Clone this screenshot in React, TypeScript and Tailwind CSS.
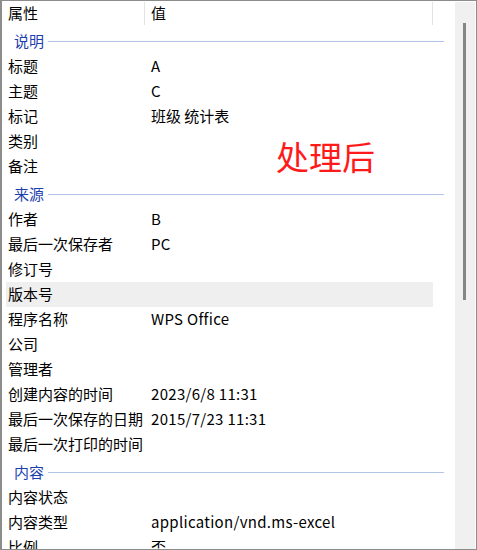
import React from "react";

type Item = { kind: "row"; label: string; value?: string; active?: boolean } | { kind: "section"; label: string };

const items: Item[] = [
  { kind: "section", label: "说明" },
  { kind: "row", label: "标题", value: "A" },
  { kind: "row", label: "主题", value: "C" },
  { kind: "row", label: "标记", value: "班级 统计表" },
  { kind: "row", label: "类别" },
  { kind: "row", label: "备注" },
  { kind: "section", label: "来源" },
  { kind: "row", label: "作者", value: "B" },
  { kind: "row", label: "最后一次保存者", value: "PC" },
  { kind: "row", label: "修订号" },
  { kind: "row", label: "版本号", active: true },
  { kind: "row", label: "程序名称", value: "WPS Office" },
  { kind: "row", label: "公司" },
  { kind: "row", label: "管理者" },
  { kind: "row", label: "创建内容的时间", value: "2023/6/8 11:31" },
  { kind: "row", label: "最后一次保存的日期", value: "2015/7/23 11:31" },
  { kind: "row", label: "最后一次打印的时间" },
  { kind: "section", label: "内容" },
  { kind: "row", label: "内容状态" },
  { kind: "row", label: "内容类型", value: "application/vnd.ms-excel" },
  { kind: "row", label: "比例", value: "否" },
];

export default function App() {
  return (
    <div
      className="relative w-[477px] h-[550px] overflow-hidden bg-white border border-[#8c8c8c] border-l-2 flex text-[15px] text-black"
      style={{ fontFamily: '"Noto Sans CJK SC", sans-serif' }}
    >
      <div className="w-[453px] flex flex-col shrink-0">
        {/* header */}
        <div className="h-[25px] flex items-stretch shrink-0">
          <div className="w-[142px] pl-[6px] leading-[24px]">属性</div>
          <div className="w-px my-[1px] bg-[#e3e3e3]" />
          <div className="w-[287px] pl-[6px] leading-[24px]">值</div>
          <div className="w-px my-[1px] bg-[#e3e3e3]" />
        </div>

        {items.map((it, i) =>
          it.kind === "section" ? (
            <div key={i} className="h-[28px] w-[442px] flex items-center pl-[12px] shrink-0">
              <span className="text-[#1d3fae] leading-none">{it.label}</span>
              <div className="flex-1 ml-[4px] mt-[2px] h-px bg-[#b3c4e6]" />
            </div>
          ) : (
            <div key={i} className="h-[25px] pl-[4px] shrink-0">
              <div className={`w-[427px] h-full flex leading-[24px] ${it.active ? "bg-[#efefef]" : ""}`}>
                <div className="w-[139px] pl-[2px] whitespace-nowrap">{it.label}</div>
                <div
                  className={`pl-[6px] whitespace-nowrap ${
                    it.value && /^[\x00-\x7f]+$/.test(it.value) ? "tracking-[0.3px]" : ""
                  }`}
                >
                  {it.value}
                </div>
              </div>
            </div>
          )
        )}
      </div>

      <div className="w-[20px] mt-[1px] bg-[#f0f0f0] shrink-0">
        <div className="ml-[8px] mt-[21px] w-[3px] h-[277px] bg-[#858585]" />
      </div>

      <div className="absolute left-[274px] top-[139px] text-[33px] leading-none text-[#ff1a1a]">处理后</div>
    </div>
  );
}
